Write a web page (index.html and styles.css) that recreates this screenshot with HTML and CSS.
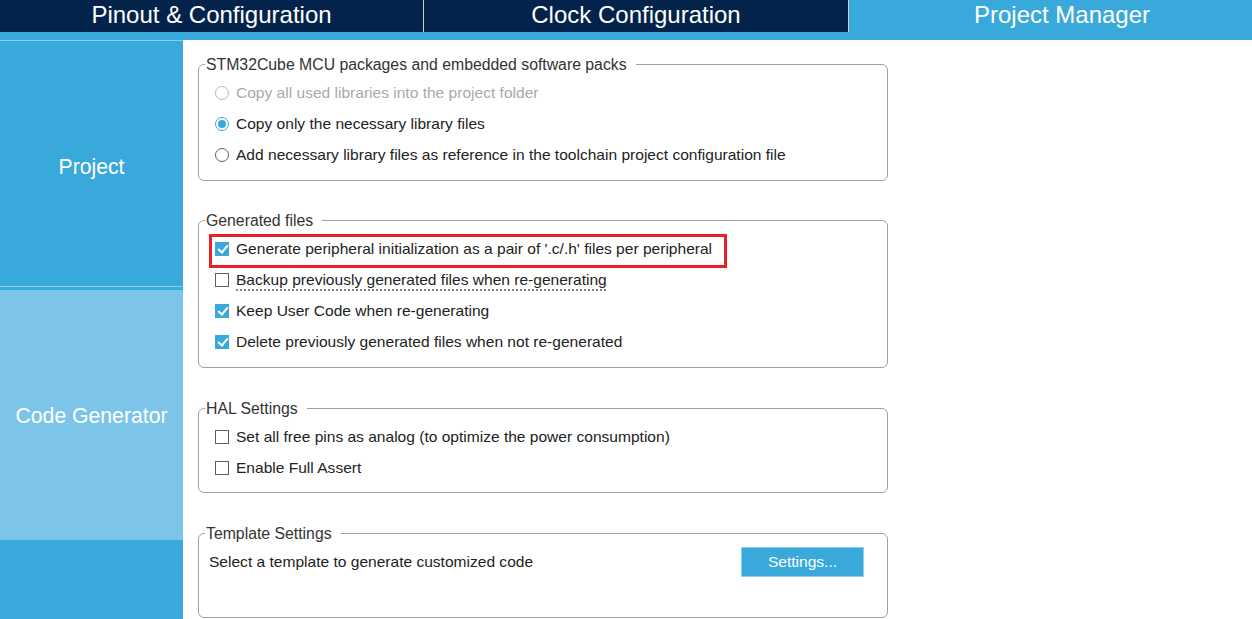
FILE: index.html
```html
<!DOCTYPE html>
<html>
<head>
<meta charset="utf-8">
<link rel="stylesheet" href="styles.css">
</head>
<body>
<div class="tabs">
  <div class="tab tab-1">Pinout &amp; Configuration</div>
  <div class="tab tab-2">Clock Configuration</div>
  <div class="tab tab-3 active">Project Manager</div>
</div>
<div class="strip"></div>
<div class="main">
  <nav class="sidebar">
    <div class="nav-item nav-project">Project</div>
    <div class="nav-item nav-code selected">Code Generator</div>
  </nav>
  <div class="content">
    <fieldset class="group group-first">
      <legend>STM32Cube MCU packages and embedded software packs</legend>
      <div class="row disabled"><span class="radio"></span><span>Copy all used libraries into the project folder</span></div>
      <div class="row"><span class="radio checked"></span><span>Copy only the necessary library files</span></div>
      <div class="row"><span class="radio"></span><span>Add necessary library files as reference in the toolchain project configuration file</span></div>
    </fieldset>

    <fieldset class="group">
      <legend>Generated files</legend>
      <div class="row highlighted"><span class="check checked"></span><span>Generate peripheral initialization as a pair of '.c/.h' files per peripheral</span><span class="mark"></span></div>
      <div class="row"><span class="check"></span><span class="tip">Backup previously generated files when re-generating</span></div>
      <div class="row"><span class="check checked"></span><span>Keep User Code when re-generating</span></div>
      <div class="row"><span class="check checked"></span><span>Delete previously generated files when not re-generated</span></div>
    </fieldset>

    <fieldset class="group group-hal">
      <legend>HAL Settings</legend>
      <div class="row"><span class="check"></span><span>Set all free pins as analog (to optimize the power consumption)</span></div>
      <div class="row"><span class="check"></span><span>Enable Full Assert</span></div>
    </fieldset>

    <fieldset class="group group-template">
      <legend>Template Settings</legend>
      <div class="row template-row"><span>Select a template to generate customized code</span><button class="btn">Settings...</button></div>
    </fieldset>
  </div>
</div>
</body>
</html>
```
FILE: styles.css
```css
* { box-sizing: border-box; }
html, body { margin: 0; padding: 0; }
body {
  width: 1252px;
  height: 619px;
  overflow: hidden;
  background: #fff;
  font-family: "Liberation Sans", Arial, sans-serif;
  color: #222;
}
.tabs {
  display: flex;
  height: 32px;
  background: #03234b;
  overflow: hidden;
  white-space: nowrap;
}
.tab {
  flex: 0 0 auto;
  display: flex;
  align-items: center;
  justify-content: center;
  color: #fff;
  font-size: 24px;
  line-height: 32px;
  padding-bottom: 2px;
}
.tab-1 { width: 424px; border-right: 1px solid #c9d0d8; }
.tab-2 { width: 425px; border-right: 1px solid #c9d0d8; }
.tab-3 { width: 426px; }
.tab.active { background: #39a9dc; }
.strip { height: 8px; background: #39a9dc; }
.main { display: flex; height: 579px; }
.sidebar {
  flex: 0 0 183px;
  background: #39a9dc;
  display: flex;
  flex-direction: column;
}
.nav-item {
  display: flex;
  align-items: center;
  justify-content: center;
  color: #fff;
  font-size: 21.2px;
}
.nav-project {
  height: 247px;
  border-top: 1px solid #8ccdec;
  border-bottom: 1px solid #8ccdec;
  margin-bottom: 3px;
  padding-top: 6px;
}
.nav-code { height: 250px; padding-top: 2px; }
.nav-item.selected { background: #7cc5e8; }
.content {
  flex: 1;
  padding: 15px 0 0 15px;
  display: flex;
  flex-direction: column;
  gap: 31px;
}
.group {
  width: 690px;
  margin: 0;
  padding: 4px 0 10px 16px;
  border: 1px solid #9aa1a7;
  border-radius: 6px;
  min-width: 0;
}
.group-first { margin-bottom: -1px; }
.group-hal { padding-bottom: 9px; }
.group legend {
  margin-left: -10px;
  padding: 0 9px 0 1px;
  font-size: 15.8px;
  line-height: 18px;
  color: #333;
  position: relative;
  top: 1px;
}
.row {
  position: relative;
  display: flex;
  align-items: center;
  gap: 7px;
  height: 31px;
  font-size: 15.55px;
  color: #222;
}
.row.disabled { color: #a9a9a9; }
.radio {
  flex: 0 0 14px;
  width: 14px;
  height: 14px;
  border: 1px solid #5f5f5f;
  border-radius: 50%;
  background: #fff;
  position: relative;
}
.row.disabled .radio { border-color: #b9b9b9; }
.radio.checked { border-color: #39a9dc; }
.radio.checked::after {
  content: "";
  position: absolute;
  left: 2px; top: 2px;
  width: 8px; height: 8px;
  border-radius: 50%;
  background: #39a9dc;
}
.check {
  flex: 0 0 14px;
  width: 14px;
  height: 14px;
  border: 1px solid #5f5f5f;
  background: #fff;
  position: relative;
}
.check.checked {
  border-color: #39a9dc;
  background: #39a9dc;
}
.check.checked::after {
  content: "";
  position: absolute;
  left: 4px; top: 0px;
  width: 4px; height: 8px;
  border-right: 2px solid #fff;
  border-bottom: 2px solid #fff;
  transform: rotate(40deg);
}
.tip {
  text-decoration: underline dotted #666;
  text-underline-offset: 5px;
}
.mark {
  position: absolute;
  left: -6px;
  top: 1px;
  width: 518px;
  height: 34px;
  border: 3px solid #e8202a;
  pointer-events: none;
}
.group-template { padding-bottom: 39px; }
.template-row {
  height: 32px;
  margin-left: -6px;
  justify-content: space-between;
  padding-right: 23px;
}
.btn {
  width: 123px;
  height: 30px;
  background: #39a9dc;
  border: 1px solid #8fd0ee;
  color: #fff;
  font-family: "Liberation Sans", Arial, sans-serif;
  font-size: 15.55px;
  padding: 0;
}
```
